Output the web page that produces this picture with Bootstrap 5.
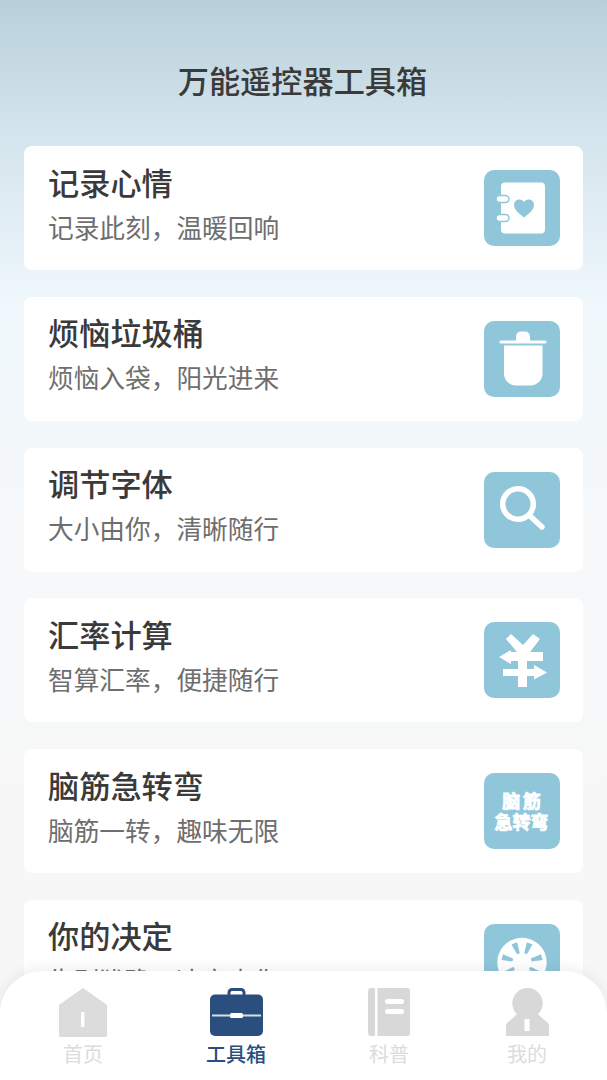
<!DOCTYPE html>
<html lang="zh-CN">
<head>
    <meta charset="UTF-8">
    <meta name="viewport" content="width=device-width, initial-scale=1.0">
    <title>万能遥控器工具箱</title>
    <link href="https://cdn.jsdelivr.net/npm/bootstrap@5.3.0/dist/css/bootstrap.min.css" rel="stylesheet">
    <style>
        html, body { height: 100%; }
        body {
            font-family: "Noto Sans CJK SC", "Noto Sans", sans-serif;
            height: 1080px;
            overflow: hidden;
            position: relative;
            background: linear-gradient(180deg, #b9d0db 0px, #d3e4ec 130px, #f0f8fd 310px, #f6f8fa 520px, #f7f7f7 800px, #f7f7f7 1080px);
        }
        .page-title {
            font-size: 31.2px;
            font-weight: 500;
            color: #3a3a3a;
            line-height: 44px;
            padding: 58px 2px 0 0;
            margin-bottom: 44px;
            text-align: center;
        }
        .tool-list { padding: 0 24px; }
        .tool-item {
            height: 124px;
            margin-bottom: 26.8px;
            padding: 0 23.500px 0 24px;
            background: #fff;
            border-radius: 8px;
        }
        .tool-text { padding-bottom: 12px; }
        .tool-name { font-size: 31.2px; font-weight: 500; color: #3a3a3a; line-height: 44px; margin-bottom: 5px; }
        .tool-desc { font-size: 25.7px; color: #6e6e6e; line-height: 36px; }
        .tool-icon {
            width: 76px;
            height: 76px;
            background: #90c6da;
            border-radius: 10px;
            flex-shrink: 0;
        }
        .tool-icon svg { display: block; }
        .brain-text {
            font-size: 18px;
            font-weight: 700;
            line-height: 21px;
            color: #fff;
            -webkit-text-stroke: 0.8px #fff;
            text-align: center;
        }
        .brain-wide { letter-spacing: 2.5px; margin-right: -2.5px; }
        .tab-bar {
            position: absolute;
            left: 0;
            right: 0;
            bottom: 0;
            height: 109px;
            padding-left: 6.5px;
            background: #fff;
            border-radius: 42px 42px 0 0;
            box-shadow: 0 -3px 14px rgba(0,0,0,0.07);
            display: grid;
            grid-template-columns: 153px 153px 153px 123px;
        }
        .tab-item { padding-top: 17px; }
        .tab-item svg { display: block; height: 49px; }
        .tab-label { font-size: 20px; line-height: 28px; color: #dcdcdc; margin-top: 3px; }
        .tab-on .tab-label { color: #2a4f7e; font-weight: 500; }
    </style>
</head>
<body>
    <h1 class="page-title">万能遥控器工具箱</h1>

    <div class="tool-list" id="toolList"></div>

    <div class="tab-bar">
        <div class="tab-item d-flex flex-column align-items-center">
            <svg width="48" height="49" viewBox="0 0 48 49">
                <path fill="#dcdcdc" d="M0 17 24 0l24 17v30.500a1.500 1.500 0 0 1-1.500 1.500h-45A1.500 1.500 0 0 1 0 47.500z"/>
                <rect x="22" y="24" width="3.400" height="15" fill="#fff"/>
            </svg>
            <div class="tab-label">首页</div>
        </div>
        <div class="tab-item tab-on d-flex flex-column align-items-center">
            <svg width="53" height="49" viewBox="0 0 53 49">
                <path fill="none" stroke="#2a4f7e" stroke-width="3" d="M19 8V4.500a3 3 0 0 1 3-3h9a3 3 0 0 1 3 3V8"/>
                <rect x="0" y="6.500" width="53" height="41.500" rx="5" fill="#2a4f7e"/>
                <path stroke="#d5e0ec" stroke-width="1.800" d="M2 27.500h49"/>
                <rect x="20" y="25" width="13" height="5" rx="1.500" fill="#fff"/>
            </svg>
            <div class="tab-label">工具箱</div>
        </div>
        <div class="tab-item d-flex flex-column align-items-center">
            <svg width="42" height="49" viewBox="0 0 42 49">
                <path fill="#d8d8d8" d="M7 0v48H3a3 3 0 0 1-3-3V3a3 3 0 0 1 3-3zM9.500 0H39a3 3 0 0 1 3 3v42a3 3 0 0 1-3 3H9.500z"/>
                <rect x="17" y="11" width="19" height="5" rx="2.500" fill="#fff"/>
                <rect x="17" y="21" width="19" height="5" rx="2.500" fill="#fff"/>
            </svg>
            <div class="tab-label">科普</div>
        </div>
        <div class="tab-item d-flex flex-column align-items-center">
            <svg width="43" height="49" viewBox="0 0 43 49">
                <circle cx="21.500" cy="15.200" r="15.200" fill="#d8d8d8"/>
                <path fill="#d8d8d8" d="M11 26h21l3 3 8 7v12H0V36l8-7z"/>
                <rect x="18.500" y="31" width="5" height="12" fill="#fff"/>
            </svg>
            <div class="tab-label">我的</div>
        </div>
    </div>

    <script src="https://cdn.jsdelivr.net/npm/bootstrap@5.3.0/dist/js/bootstrap.bundle.min.js"></script>
    <script>
        // spokes of the wheel icon, angles read off the reference
        const spokes = [-125, -75, -22, 22, 75, 125].map(a =>
            `<path fill="#90c6da" d="M36.500 29 35 18h6l-1.500 11z" transform="rotate(${a} 38 38.500)"/>`
        ).join('');

        // icon art for each tool, all on a 76 box
        const icons = {
            note: `<svg width="76" height="76" viewBox="0 0 76 76">
                <rect x="17" y="12.500" width="44" height="51" rx="4" fill="#fff"/>
                <rect x="12" y="25.500" width="13" height="7" rx="3.500" fill="#fff" stroke="#90c6da" stroke-width="1.500"/>
                <rect x="12" y="44.500" width="13" height="7" rx="3.500" fill="#fff" stroke="#90c6da" stroke-width="1.500"/>
                <path fill="#90c6da" d="M40 47.500c-2-2-10-6.500-10-12.500 0-3.500 2.500-5.500 5.500-5.500 2 0 3.500 1 4.500 2.800 1-1.800 2.500-2.800 4.500-2.800 3 0 5.500 2 5.500 5.500 0 6-8 10.500-10 12.500z"/>
            </svg>`,
            bin: `<svg width="76" height="76" viewBox="0 0 76 76">
                <path fill="#fff" d="M32 20v-4.500a5 5 0 0 1 5-5h4a5 5 0 0 1 5 5V20z"/>
                <rect x="15.500" y="19.500" width="47" height="3" rx="1.500" fill="#fff"/>
                <path fill="#fff" d="M20 24.500h38.500V52a12 12 0 0 1-12 12.500H32A12 12 0 0 1 20 52z"/>
            </svg>`,
            search: `<svg width="76" height="76" viewBox="0 0 76 76">
                <circle cx="34" cy="32" r="15.300" fill="none" stroke="#fff" stroke-width="5.500"/>
                <path stroke="#fff" stroke-width="5.500" stroke-linecap="round" d="M46 44l12 11"/>
            </svg>`,
            yen: `<svg width="76" height="76" viewBox="0 0 76 76">
                <path fill="#fff" d="M22 17l5-5 12 11 10-11 7 5-10 13h13v9H43v8h7v-4l13 7.500-13 7V54h-7v11h-9V54H19v-7h15v-8h-7v3l-12-7 12-7v2h6z"/>
            </svg>`,
            wheel: `<svg width="76" height="76" viewBox="0 0 76 76">
                <circle cx="38" cy="38.500" r="24.700" fill="#fff"/>
                ${spokes}
                <circle cx="38" cy="38.500" r="6.200" fill="#fff"/>
            </svg>`,
            brain: `<div class="brain-text"><span class="brain-wide">脑筋</span><br>急转弯</div>`
        };

        const tools = [
            ['记录心情', '记录此刻，温暖回响', 'note'],
            ['烦恼垃圾桶', '烦恼入袋，阳光进来', 'bin'],
            ['调节字体', '大小由你，清晰随行', 'search'],
            ['汇率计算', '智算汇率，便捷随行', 'yen'],
            ['脑筋急转弯', '脑筋一转，趣味无限', 'brain'],
            ['你的决定', '告别犹豫，决定由你', 'wheel']
        ];

        document.getElementById('toolList').innerHTML = tools.map(t => `
            <div class="tool-item d-flex align-items-center justify-content-between">
                <div class="tool-text">
                    <div class="tool-name">${t[0]}</div>
                    <div class="tool-desc">${t[1]}</div>
                </div>
                <div class="tool-icon d-flex align-items-center justify-content-center">${icons[t[2]]}</div>
            </div>
        `).join('');
    </script>
</body>
</html>
